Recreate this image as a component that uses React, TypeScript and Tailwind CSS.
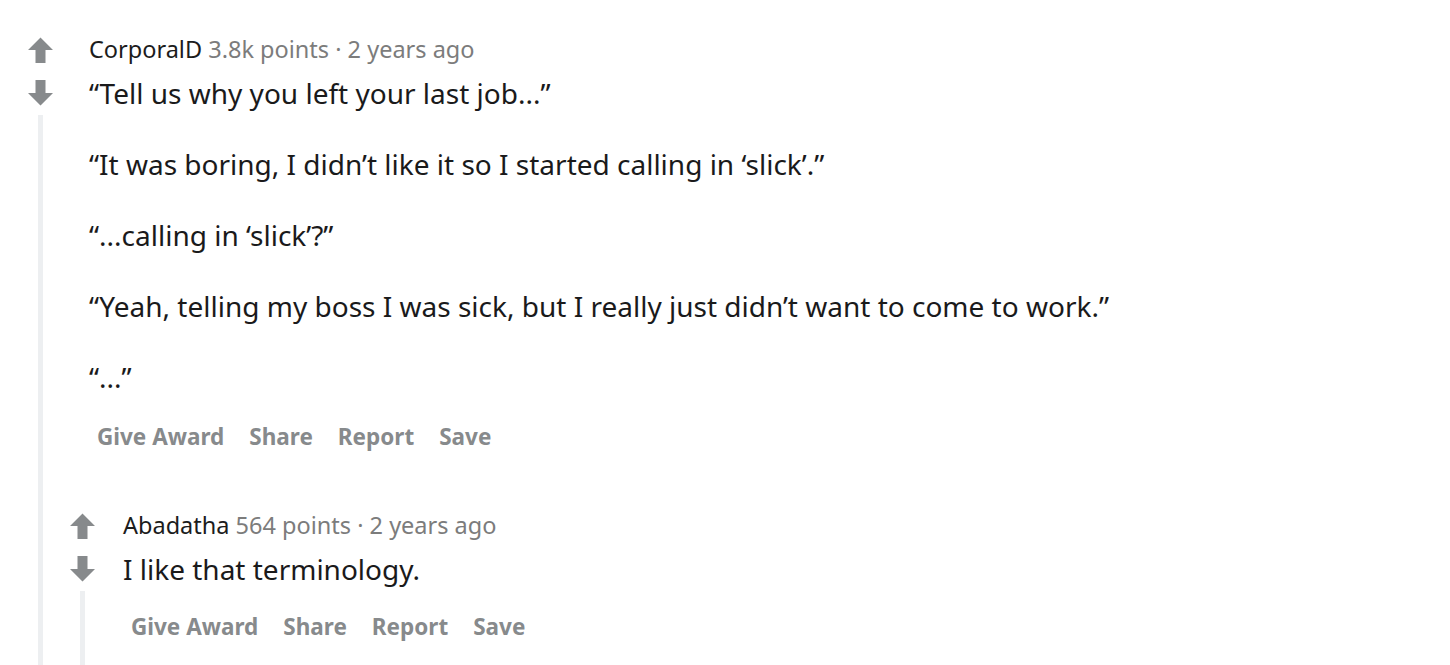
import React from 'react'

type CommentData = {
  author: string
  points: string
  age: string
  body: string[]
  replies?: CommentData[]
}

const thread: CommentData = {
  author: 'CorporalD',
  points: '3.8k points',
  age: '2 years ago',
  body: [
    '\u201cTell us why you left your last job...\u201d',
    '\u201cIt was boring, I didn\u2019t like it so I started calling in \u2018slick\u2019.\u201d',
    '\u201c...calling in \u2018slick\u2019?\u201d',
    '\u201cYeah, telling my boss I was sick, but I really just didn\u2019t want to come to work.\u201d',
    '\u201c...\u201d',
  ],
  replies: [
    {
      author: 'Abadatha',
      points: '564 points',
      age: '2 years ago',
      body: ['I like that terminology.'],
    },
  ],
}

const Arrow: React.FC<{ down?: boolean }> = ({ down }) => (
  <svg
    width="27"
    height="26"
    viewBox="0 0 26 26"
    className={down ? 'rotate-180' : ''}
  >
    <path
      d="M13 0.5 L25.5 13 L18 13 L18 26 L8 26 L8 13 L0.5 13 Z"
      fill="#878a8c"
      strokeLinejoin="round"
    />
  </svg>
)

const actions = ['Give Award', 'Share', 'Report', 'Save']

const Comment: React.FC<{ comment: CommentData; depth?: number }> = ({
  comment,
  depth = 0,
}) => {
  return (
    <div className="flex">
      <div className="flex w-[27px] shrink-0 flex-col items-center">
        <div className="mt-[1px]">
          <Arrow />
        </div>
        <div className="mt-[17px]">
          <Arrow down />
        </div>
        <div className="mt-[9px] w-[5px] flex-1 bg-[#edeff1]" />
      </div>
      <div className="flex min-w-0 flex-1 flex-col">
        <div className={depth === 0 ? 'pl-[35px]' : 'pl-[27px]'}>
          <div className="font-['Noto_Sans',sans-serif] text-[23.5px] leading-[26px] text-[#7c7c7c]">
            <span className="text-[#1c1c1c]">{comment.author}</span>{' '}
            {comment.points} · {comment.age}
          </div>
          <div className="mt-[12px] flex flex-col gap-[33px] font-['Noto_Sans',sans-serif] text-[28px] leading-[38px] text-[#1a1a1b]">
            {comment.body.map((p, i) => (
              <p key={i}>{p}</p>
            ))}
          </div>
          <div
            className={
              'flex gap-[9px] font-[\'Open_Sans\',sans-serif] text-[22.5px] leading-[30px] font-bold text-[#878a8c] ' +
              (depth === 0 ? 'mt-[26px]' : 'mt-[24px]')
            }
          >
            {actions.map((a) => (
              <button key={a} type="button" className="px-[8px]">
                {a}
              </button>
            ))}
          </div>
        </div>
        {comment.replies && (
          <div className="mt-[60px] pl-[15px]">
            {comment.replies.map((r, i) => (
              <Comment key={i} comment={r} depth={depth + 1} />
            ))}
          </div>
        )}
        {!comment.replies && <div className="h-[80px]" />}
      </div>
    </div>
  )
}

export default function App() {
  return (
    <div className="h-[665px] w-[1450px] overflow-hidden bg-white pt-[36px] pl-[27px]">
      <Comment comment={thread} />
    </div>
  )
}
